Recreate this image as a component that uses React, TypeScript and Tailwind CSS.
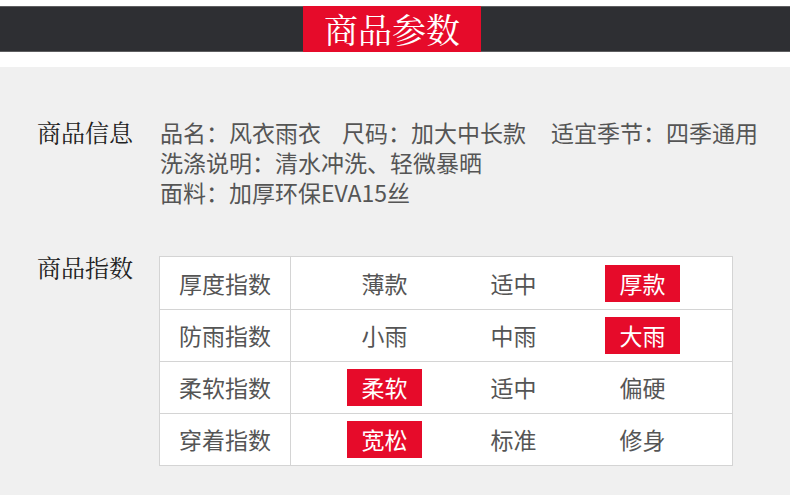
import React from "react";

const RED = "bg-[#e60b2a]";

type Cell = { text: string; on?: boolean };

const rows: { label: string; cells: Cell[] }[] = [
  { label: "厚度指数", cells: [{ text: "薄款" }, { text: "适中" }, { text: "厚款", on: true }] },
  { label: "防雨指数", cells: [{ text: "小雨" }, { text: "中雨" }, { text: "大雨", on: true }] },
  { label: "柔软指数", cells: [{ text: "柔软", on: true }, { text: "适中" }, { text: "偏硬" }] },
  { label: "穿着指数", cells: [{ text: "宽松", on: true }, { text: "标准" }, { text: "修身" }] },
];

function Heading({ children }: { children: React.ReactNode }) {
  return (
    <div className="w-[159px] shrink-0 pl-[37px] whitespace-nowrap text-[24px] leading-[30px] text-[#222] font-['Noto_Serif_CJK_SC','Noto_Sans_CJK_SC',serif]">
      {children}
    </div>
  );
}

export default function App() {
  return (
    <div className="w-[790px] h-[495px] overflow-hidden bg-[#f0f0f0] font-['Noto_Sans_CJK_SC',sans-serif]">
      <div className="bg-white pt-[6px] pb-[15px]">
        <div className="h-[46px] bg-[#2e2f33] border-y border-[#5e5e60] flex">
          <div className={`ml-[303px] w-[178px] -my-px ${RED} flex items-center justify-center text-white text-[34px] leading-none font-['Noto_Serif_CJK_SC','Noto_Sans_CJK_SC',serif]`}>
            商品参数
          </div>
        </div>
      </div>

      <div className="flex pt-[50px]">
        <Heading>商品信息</Heading>
        <div className="pl-px whitespace-nowrap text-[23px] leading-[30px] text-[#555]">
          <div className="flex">
            <span className="mr-[21px]">品名：风衣雨衣</span>
            <span className="mr-[25px]">尺码：加大中长款</span>
            <span>适宜季节：四季通用</span>
          </div>
          <div>洗涤说明：清水冲洗、轻微暴晒</div>
          <div>面料：加厚环保EVA15丝</div>
        </div>
      </div>

      <div className="flex mt-[45px]">
        <Heading>商品指数</Heading>
        <div className="mt-[4px] w-[574px] bg-white border border-[#d4d4d4]">
          {rows.map((row, i) => (
            <div
              key={row.label}
              className={`flex h-[52px] ${i > 0 ? "border-t border-[#d4d4d4]" : ""}`}
            >
              <div className="w-[131px] border-r border-[#d4d4d4] flex items-center justify-center text-[23px] text-[#555]">
                {row.label}
              </div>
              <div className="grid grid-cols-[129px_129px_129px] pl-[29px]">
                {row.cells.map((c) => (
                  <div key={c.text} className="flex items-center justify-center">
                    {c.on ? (
                      <span className={`w-[75px] h-[37px] ${RED} text-white text-[23px] flex items-center justify-center`}>
                        {c.text}
                      </span>
                    ) : (
                      <span className="text-[23px] text-[#555]">{c.text}</span>
                    )}
                  </div>
                ))}
              </div>
            </div>
          ))}
        </div>
      </div>
    </div>
  );
}
